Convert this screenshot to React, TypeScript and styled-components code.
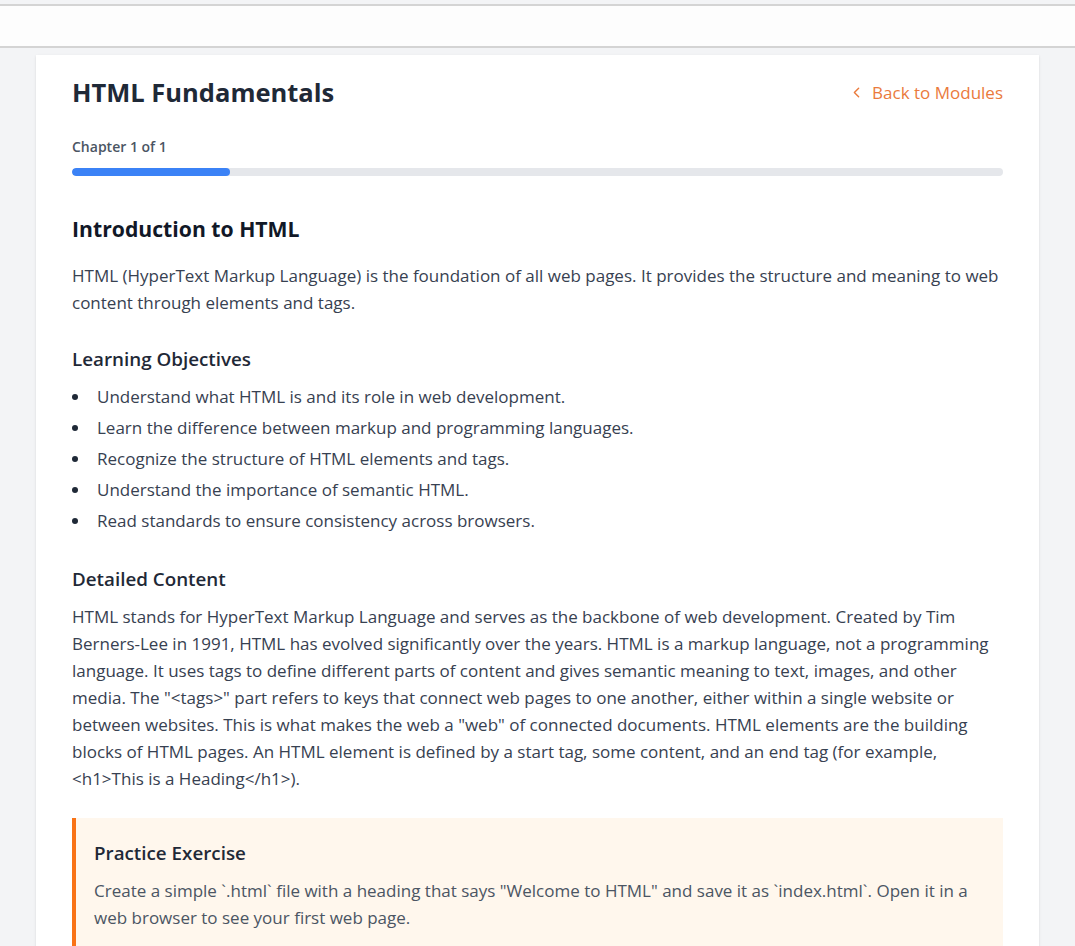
import styled, { createGlobalStyle } from 'styled-components';

const GlobalStyle = createGlobalStyle`
  html, body {
    margin: 0;
    padding: 0;
    background: #f3f4f6;
    font-family: 'Open Sans', 'Noto Sans', sans-serif;
    color: #374151;
  }
  * {
    box-sizing: border-box;
  }
`;

const objectives = [
  'Understand what HTML is and its role in web development.',
  'Learn the difference between markup and programming languages.',
  'Recognize the structure of HTML elements and tags.',
  'Understand the importance of semantic HTML.',
  'Read standards to ensure consistency across browsers.',
];

const TopBar = styled.header`
  margin-top: 4px;
  height: 44px;
  background: #fdfdfd;
  border-top: 2px solid #d4d4d4;
  border-bottom: 2px solid #d4d4d4;
`;

const Main = styled.main`
  padding: 7px 36px 0;
`;

const Card = styled.article`
  background: #ffffff;
  padding: 19px 36px 40px;
  box-shadow: 0 1px 3px rgba(0, 0, 0, 0.08), 0 1px 2px rgba(0, 0, 0, 0.04);
  min-height: 900px;
`;

const TitleRow = styled.div`
  display: flex;
  justify-content: space-between;
  align-items: center;
`;

const Title = styled.h1`
  margin: 0;
  font-size: 25.5px;
  line-height: 36px;
  font-weight: 700;
  color: #1f2937;
`;

const BackLink = styled.a`
  display: flex;
  align-items: center;
  gap: 7px;
  font-size: 17px;
  color: #ea7a3c;
  text-decoration: none;
  cursor: pointer;
`;

const ProgressLabel = styled.div`
  margin-top: 27px;
  margin-bottom: 11px;
  font-size: 14px;
  line-height: 20px;
  font-weight: 600;
  color: #4b5563;
`;

const Track = styled.div`
  height: 8px;
  border-radius: 4px;
  background: #e5e7eb;
  overflow: hidden;
`;

const Fill = styled.div`
  height: 100%;
  border-radius: 4px;
  background: #3b82f6;
`;

const SectionTitle = styled.h2`
  margin: 39px 0 19px;
  font-size: 21.2px;
  line-height: 28px;
  font-weight: 700;
  color: #111827;
`;

const SubTitle = styled.h3<{ $top?: number }>`
  margin: ${(p) => p.$top ?? 30}px 0 11px;
  font-size: 18.8px;
  line-height: 26px;
  font-weight: 600;
  color: #1f2937;
`;

const Paragraph = styled.p<{ $muted?: boolean }>`
  margin: 0;
  font-size: 17px;
  line-height: 27px;
  color: ${(p) => (p.$muted ? '#4b5563' : '#374151')};
`;

const List = styled.ul`
  margin: 0;
  padding: 0;
  list-style: none;
`;

const Item = styled.li`
  display: flex;
  align-items: center;
  font-size: 17px;
  line-height: 27px;
  margin-bottom: 4px;
  &::before {
    content: '';
    flex: none;
    width: 6px;
    height: 6px;
    margin-right: 19px;
    border-radius: 50%;
    background: #1f2937;
  }
`;

const Exercise = styled.aside`
  margin-top: 26px;
  padding: 22px 22px 24px 18px;
  background: #fff7ed;
  border-left: 4px solid #f97316;
`;

const Chevron = () => (
  <svg width="17" height="17" viewBox="0 0 24 24" fill="none" stroke="currentColor" strokeWidth="2" strokeLinecap="round" strokeLinejoin="round">
    <path d="M15 18l-6-6 6-6" />
  </svg>
);

export default function App() {
  const progress = 17;
  return (
    <>
      <GlobalStyle />
      <TopBar />
      <Main>
        <Card>
          <TitleRow>
            <Title>HTML Fundamentals</Title>
            <BackLink>
              <Chevron />
              Back to Modules
            </BackLink>
          </TitleRow>
          <ProgressLabel>Chapter 1 of 1</ProgressLabel>
          <Track>
            <Fill style={{ width: `${progress}%` }} />
          </Track>

          <SectionTitle>Introduction to HTML</SectionTitle>
          <Paragraph>
            HTML (HyperText Markup Language) is the foundation of all web pages. It provides the structure and meaning to web
            content through elements and tags.
          </Paragraph>

          <SubTitle>Learning Objectives</SubTitle>
          <List>
            {objectives.map((o) => (
              <Item key={o}>{o}</Item>
            ))}
          </List>

          <SubTitle $top={32}>Detailed Content</SubTitle>
          <Paragraph>
            HTML stands for HyperText Markup Language and serves as the backbone of web development. Created by Tim
            Berners-Lee in 1991, HTML has evolved significantly over the years. HTML is a markup language, not a programming
            language. It uses tags to define different parts of content and gives semantic meaning to text, images, and other
            media. The "&lt;tags&gt;" part refers to keys that connect web pages to one another, either within a single website or
            between websites. This is what makes the web a "web" of connected documents. HTML elements are the building
            blocks of HTML pages. An HTML element is defined by a start tag, some content, and an end tag (for example,
            &lt;h1&gt;This is a Heading&lt;/h1&gt;).
          </Paragraph>

          <Exercise>
            <SubTitle $top={0}>Practice Exercise</SubTitle>
            <Paragraph $muted>
              Create a simple `.html` file with a heading that says "Welcome to HTML" and save it as `index.html`. Open it in a
              web browser to see your first web page.
            </Paragraph>
          </Exercise>
        </Card>
      </Main>
    </>
  );
}
